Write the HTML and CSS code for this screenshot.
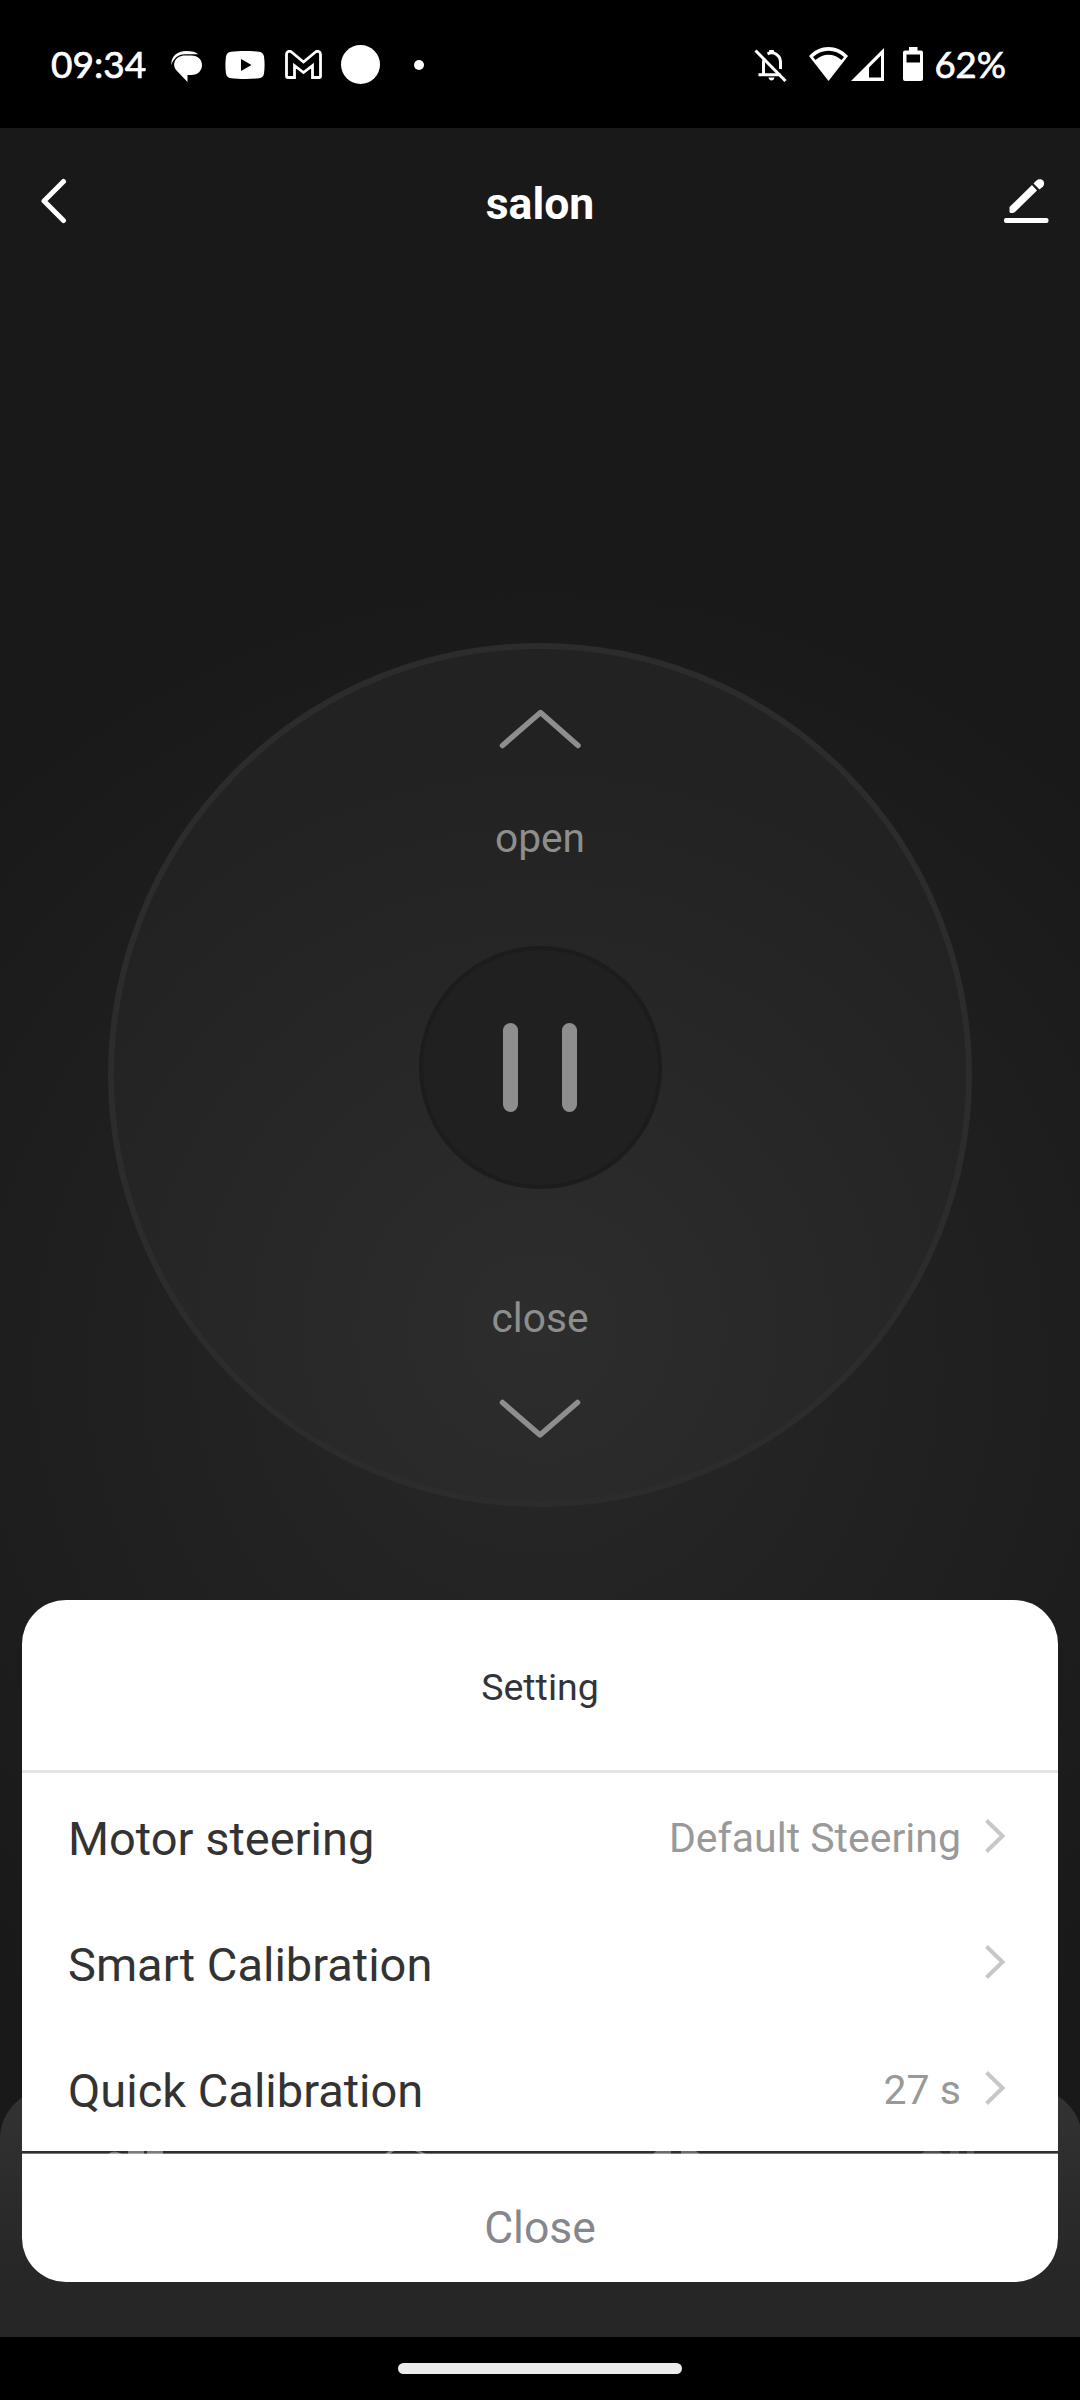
FILE: index.html
```html
<!DOCTYPE html>
<html lang="en">
<head>
    <meta charset="UTF-8">
    <meta name="viewport" content="width=device-width, initial-scale=1.0">
    <title>salon</title>
    <link rel="stylesheet" href="styles.css">
</head>
<body>
    <div class="screen">
        <div class="status-bar">
            <span class="clock">09:34</span>
            <svg class="status-icon icon-chat" width="33" height="31" viewBox="0 0 33 31">
                <path d="M.5 14C-.5 6 6 0 15 0c6 0 10 1 12 3.300H14C7 3.300 2 8 .5 14z" fill="#fff"/>
                <path d="M14 4.500H20C27.500 4.500 31 9 31 14s-3.500 10-11 10h-3.500v7L6 20C0 14 4 4.500 14 4.500z" fill="#fff"/>
            </svg>
            <svg class="status-icon icon-youtube" width="40" height="28" viewBox="0 0 40 28">
                <path d="M6 .8C14-.2 26-.2 34 .8c3 .4 4.500 2 5 4.700.8 5.500.8 11.500 0 17-.5 2.700-2 4.300-5 4.700-8 1-20 1-28 0-3-.4-4.500-2-5-4.700-.8-5.500-.8-11.500 0-17C1.500 2.800 3 1.200 6 .8z" fill="#fff"/>
                <path d="M16 8l10.500 6L16 20z" fill="#000"/>
            </svg>
            <svg class="status-icon icon-gmail" width="37" height="29" viewBox="0 0 37 29">
                <path d="M3 27.500q-1.500 0-1.500-1.500V4.500C1.500 1.500 4.500.5 6.500 2L18.500 12 30.500 2c2-1.500 5-.5 5 2.500V26q0 1.500-1.500 1.500h-6.500V15.500L18.500 22.500l-9-7v12z" fill="none" stroke="#fff" stroke-width="2.800"/>
            </svg>
            <span class="circle-badge"></span>
            <span class="more-dot"></span>
            <div class="status-right">
                <svg class="icon-bell" width="33" height="34" viewBox="0 0 33 34" fill="none" stroke="#fff" stroke-width="3">
                    <path d="M1.500 2.500l30 30.500"/>
                    <path d="M4.500 26.700h22M9.500 26V14c0-1.500.3-3 1-4M13.500 5.800c7-3 13 2 13 8.200v7"/>
                    <path d="M15.500 5.500V2.500h4V5.500z" fill="#fff" stroke-width="1"/>
                    <path d="M14.500 29.500h6c-.5 4-5.500 4-6 0z" fill="#fff" stroke="none"/>
                </svg>
                <svg class="icon-wifi" width="39" height="34" viewBox="0 0 39 34">
                    <path d="M0 9C11-3 28-3 39 9L19.500 34z" fill="#fff"/>
                    <path d="M4 10C13 1.500 26 1.500 35 10l-2.500 3C24.500 6 14.500 6 6.500 13z" fill="#000"/>
                </svg>
                <svg class="icon-signal" width="33" height="33" viewBox="0 0 33 33">
                    <path d="M33 0v33H0z" fill="#fff"/>
                    <path d="M30 7.500V29.500H18V19.500z" fill="#000"/>
                </svg>
                <svg class="icon-battery" width="20" height="34" viewBox="0 0 20 34">
                    <path d="M6 0h8.500v3.500H18q2 0 2 2V32q0 2-2 2H2q-2 0-2-2V5.500q0-2 2-2h4z" fill="#fff"/>
                    <path d="M3.500 7.500h13.500v8H3.500z" fill="#000"/>
                </svg>
                <span class="battery-level">62%</span>
            </div>
        </div>

        <div class="app">
            <header class="top-bar">
                <svg class="back" width="27" height="46" viewBox="0 0 27 46">
                    <path d="M23.500 3.500L4 23l19.500 19.500" fill="none" stroke="#fff" stroke-width="5" stroke-linecap="round" stroke-linejoin="round"/>
                </svg>
                <h1>salon</h1>
                <svg class="edit" width="45" height="46" viewBox="0 0 45 46" fill="#fff">
                    <path d="M5.500 29L28 7l5 5.500-21.500 21q-1.500 1.500-3.500 1.500H7q-1.500 0-1.500-1.500z"/>
                    <path d="M29.500 5.500l3-3c2-2 5-1.500 6.500 0s1.500 4 0 6L35.500 11.500z"/>
                    <rect x="0" y="40" width="44.500" height="5" rx="2"/>
                </svg>
            </header>

            <main class="dial">
                <svg class="arrow" width="84" height="42" viewBox="0 0 84 42">
                    <path d="M4.500 37.500L42.500 4.500 80 37.500"/>
                </svg>
                <span class="dial-label">open</span>
                <button class="pause" aria-label="pause"><i></i><i></i></button>
                <span class="dial-label dial-label-close">close</span>
                <svg class="arrow arrow-down" width="84" height="42" viewBox="0 0 84 42">
                    <path d="M4.500 4.500L42 37 79.500 4.500"/>
                </svg>
            </main>

            <div class="bottom-panel">
                <!-- tops of the tab icons, seen through the gap in the sheet -->
                <svg class="tab-tops" width="1080" height="3" viewBox="0 0 1080 3" fill="#7c7c7c">
                    <path d="M108 3q6-5 14 0zM128 0h16v3h-16zM147 0h16v3h-16z"/>
                    <path d="M385 3l4-3h5l-4 3zM415 0h5l6 3h-5z"/>
                    <path d="M653 3l3-3h15v3zM681 0h15l4 3h-19z" fill="#6c6c6c"/>
                    <path d="M921 3l4-3h14l4 3zM950 0h9v3h-9zM967 0h7v3h-7z" fill="#505050"/>
                </svg>
            </div>

            <section class="sheet">
                <h2 class="sheet-title">Setting</h2>
                <ul class="sheet-list">
                    <li>
                        <span class="name">Motor steering</span>
                        <span class="value">Default Steering</span>
                        <svg class="chevron" width="22" height="36" viewBox="0 0 22 36"><path d="M2.500 2.500L18.500 18 2.500 33.500"/></svg>
                    </li>
                    <li>
                        <span class="name">Smart Calibration</span>
                        <svg class="chevron" width="22" height="36" viewBox="0 0 22 36"><path d="M2.500 2.500L18.500 18 2.500 33.500"/></svg>
                    </li>
                    <li>
                        <span class="name">Quick Calibration</span>
                        <span class="value">27 s</span>
                        <svg class="chevron" width="22" height="36" viewBox="0 0 22 36"><path d="M2.500 2.500L18.500 18 2.500 33.500"/></svg>
                    </li>
                </ul>
                <button class="sheet-close">Close</button>
            </section>
        </div>

        <div class="nav-bar">
            <span class="handle"></span>
        </div>
    </div>
</body>
</html>
```
FILE: styles.css
```css
* {
    box-sizing: border-box;
    margin: 0;
    padding: 0;
    font-family: Roboto, "Liberation Sans", sans-serif;
}

body {
    background-color: #000;
}

svg {
    display: block;
    flex-shrink: 0;
}

button {
    border: none;
    background: none;
}

.screen {
    width: 1080px;
    height: 2400px;
    display: flex;
    flex-direction: column;
    overflow: hidden;
}

/* status bar */

.status-bar {
    height: 128px;
    padding: 0 74px 0 51px;
    display: flex;
    align-items: center;
    background-color: #000;
    color: #fff;
}

.clock,
.battery-level {
    font-family: Lato, sans-serif;
    font-size: 37px;
    line-height: 44px;
    -webkit-text-stroke: 0.7px #fff;
}

.clock {
    width: 120px;
}

.battery-level {
    font-size: 36.5px;
}

.icon-chat {
    margin: 4px 21px 0 0;
}

.icon-youtube {
    margin: 2px 20px 0 0;
}

.icon-gmail {
    margin-right: 19px;
}

.circle-badge {
    width: 39px;
    height: 39px;
    border-radius: 50%;
    background-color: #fff;
}

.more-dot {
    width: 10px;
    height: 10px;
    margin: 2px 0 0 34px;
    border-radius: 50%;
    background-color: #fff;
}

.status-right {
    margin-left: auto;
    display: flex;
    align-items: center;
}

.icon-bell {
    margin: 2px 22px 0 0;
}

.icon-wifi {
    margin-right: 3px;
}

.icon-signal {
    margin-right: 19px;
}

.icon-battery {
    margin-right: 11px;
}

/* app */

.app {
    position: relative;
    height: 2209px;
    background: radial-gradient(circle at 540px 1240px, #282828 0, #191919 800px);
    overflow: hidden;
}

.top-bar {
    height: 146px;
    padding: 0 31px 0 40px;
    display: grid;
    grid-template-columns: 45px 1fr 45px;
    align-items: center;
}

.top-bar h1 {
    margin: 5px 0 0 -9px;
    color: #fff;
    font-size: 44.5px;
    font-weight: 700;
    line-height: 52px;
    text-align: center;
}

.dial {
    width: 864px;
    height: 864px;
    margin: 369px auto 0;
    padding-top: 59px;
    display: flex;
    flex-direction: column;
    align-items: center;
    border: 6px solid #2c2c2c;
    border-radius: 50%;
    background: radial-gradient(circle at 50% 80%, #2d2d2d 0, #222 580px);
}

.arrow path {
    fill: none;
    stroke: #8e8e8e;
    stroke-width: 5.5;
    stroke-linecap: round;
    stroke-linejoin: round;
}

.dial-label {
    margin-top: 64px;
    color: #8e8e8e;
    font-size: 40.7px;
    line-height: 48px;
}

.pause {
    width: 243px;
    height: 243px;
    margin-top: 84px;
    display: flex;
    align-items: center;
    justify-content: center;
    gap: 44px;
    border: 4px solid #1c1c1c;
    border-radius: 50%;
    background-color: #202020;
}

.pause i {
    width: 15px;
    height: 89px;
    border-radius: 8px;
    background-color: #8e8e8e;
}

.dial-label-close {
    margin-top: 105px;
}

.arrow-down {
    margin-top: 56px;
}

.bottom-panel {
    position: absolute;
    left: 0;
    bottom: 0;
    width: 1082px;
    height: 248px;
    padding-top: 62px;
    border-radius: 50px 50px 0 0;
    background: linear-gradient(#333, #2b2b2b 45%, #262626 80%);
}

/* settings sheet */

.sheet {
    position: absolute;
    left: 22px;
    right: 22px;
    bottom: 55px;
    border-radius: 44px;
    overflow: hidden;
}

.sheet-title {
    height: 173px;
    background-color: #fff;
    border-bottom: 3px solid #e5e5e5;
    color: #33343a;
    font-size: 37.5px;
    font-weight: 400;
    line-height: 175px;
    text-align: center;
}

.sheet-list {
    margin-bottom: 2px;
    background-color: #fff;
    list-style: none;
}

.sheet-list li {
    height: 126px;
    padding: 0 52px 0 46px;
    display: flex;
    align-items: center;
}

.name {
    margin-top: 4px;
    color: #333;
    font-size: 47px;
}

.value {
    margin-top: 4px;
    margin-left: auto;
    color: #999;
    font-size: 41px;
}

.chevron {
    margin-left: 23px;
}

.name + .chevron {
    margin-left: auto;
}

.chevron path {
    fill: none;
    stroke: #c7c7c7;
    stroke-width: 4;
}

.sheet-close {
    display: block;
    width: 100%;
    height: 129px;
    padding-top: 19px;
    border-top: 1px solid rgba(255, 255, 255, 0.35);
    background-color: #fff;
    background-clip: padding-box;
    color: #86878c;
    font-size: 44.5px;
}

/* gesture bar */

.nav-bar {
    height: 63px;
    padding-top: 26px;
    background-color: #000;
}

.handle {
    display: block;
    width: 284px;
    height: 11px;
    margin: 0 auto;
    border-radius: 6px;
    background-color: #ebebeb;
}
```
